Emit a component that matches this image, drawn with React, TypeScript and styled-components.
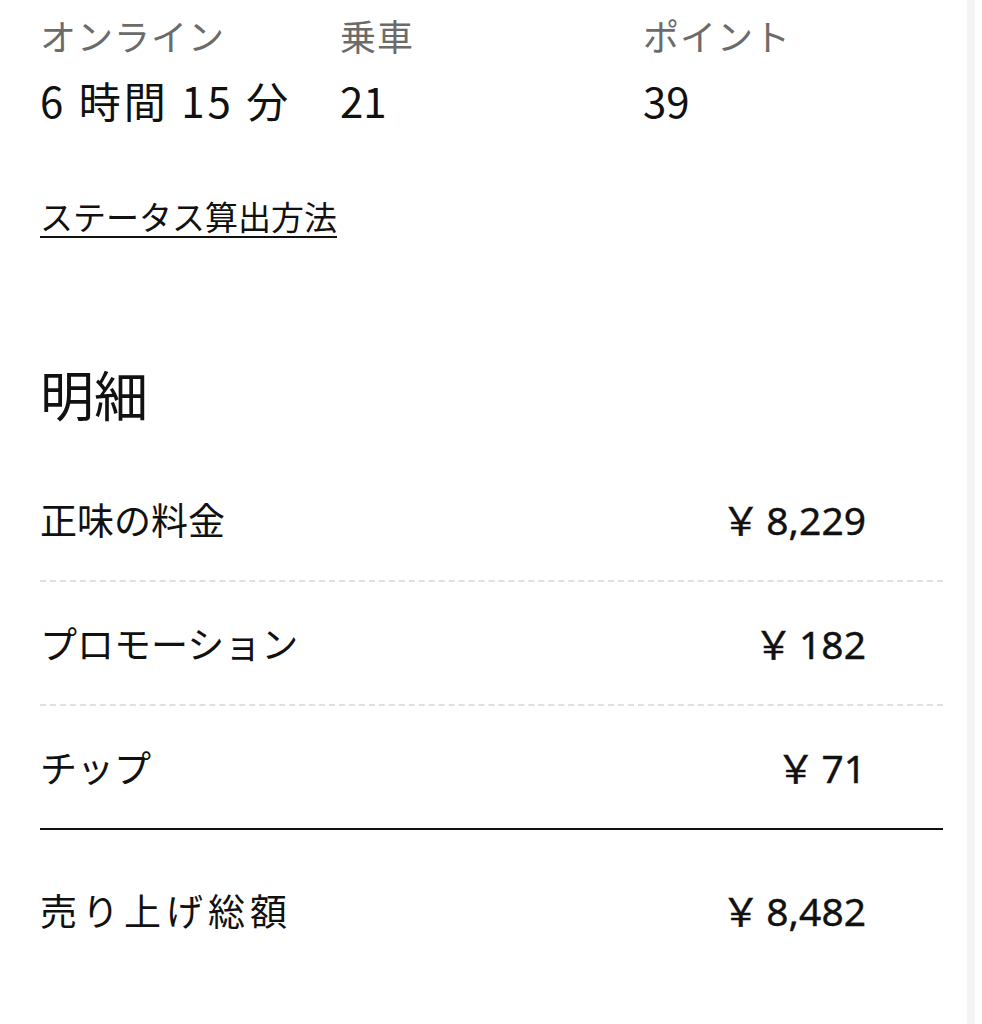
import React from 'react';
import styled, { createGlobalStyle } from 'styled-components';

const GlobalStyle = createGlobalStyle`
  body {
    margin: 0;
    background: #ffffff;
    font-family: "Noto Sans CJK JP", "Noto Sans", sans-serif;
    color: #111111;
  }
`;

const Page = styled.div`
  display: flex;
  width: 982px;
  min-height: 1024px;
`;

const Content = styled.main`
  width: 903px;
  padding-left: 40px;
`;

const Scrollbar = styled.div`
  width: 8px;
  margin-left: 24px;
  background: #f4f4f4;
`;

const StatsGrid = styled.div`
  display: grid;
  grid-template-columns: 300px 303px 1fr;
  padding-top: 13px;
`;

const Stat = styled.div`
  display: flex;
  flex-direction: column;
  gap: 18px;
`;

const StatLabel = styled.div`
  font-size: 36px;
  line-height: 44px;
  letter-spacing: 1px;
  color: #6b6b6b;
`;

const StatValue = styled.div<{ $wide?: boolean }>`
  font-size: 42px;
  line-height: 50px;
  color: #111111;
  letter-spacing: ${(p) => (p.$wide ? '3px' : '0')};
`;

const StatusLink = styled.a`
  display: inline-block;
  margin-top: 71px;
  font-size: 33px;
  line-height: 40px;
  color: #111111;
  text-decoration: underline;
  text-decoration-thickness: 2px;
  text-underline-offset: 6px;
`;

const Heading = styled.h2`
  margin: 128px 0 34px;
  font-size: 54px;
  line-height: 60px;
  font-weight: 400;
  color: #111111;
`;

const Row = styled.div<{ $line: 'dashed' | 'solid' | 'none'; $tall?: boolean }>`
  display: flex;
  align-items: center;
  justify-content: space-between;
  height: ${(p) => (p.$tall ? '160px' : '122px')};
  padding-right: 77px;
  border-bottom: ${(p) =>
    p.$line === 'solid' ? '2px solid #111111' : p.$line === 'dashed' ? '2px dashed #e0e0e0' : 'none'};
`;

const RowLabel = styled.span<{ $total?: boolean }>`
  font-size: 37px;
  line-height: 44px;
  color: #111111;
  letter-spacing: ${(p) => (p.$total ? '5px' : '0')};
`;

const RowValue = styled.span`
  display: inline-flex;
  align-items: baseline;
  font-size: 39px;
  line-height: 44px;
  color: #111111;
  font-family: "Noto Sans", "Noto Sans CJK JP", sans-serif;
  -webkit-text-stroke: 0.4px #111111;
`;

const Yen = styled.span`
  font-family: "Noto Sans CJK JP", sans-serif;
  margin-right: 6px;
`;

const stats = [
  { label: 'オンライン', value: '6 時間 15 分', wide: true },
  { label: '乗車', value: '21' },
  { label: 'ポイント', value: '39' },
];

const lines: { label: string; amount: string; line: 'dashed' | 'solid' | 'none'; total?: boolean }[] = [
  { label: '正味の料金', amount: '8,229', line: 'dashed' },
  { label: 'プロモーション', amount: '182', line: 'dashed' },
  { label: 'チップ', amount: '71', line: 'solid' },
  { label: '売り上げ総額', amount: '8,482', line: 'none', total: true },
];

export default function App() {
  return (
    <Page>
      <GlobalStyle />
      <Content>
        <StatsGrid>
          {stats.map((s) => (
            <Stat key={s.label}>
              <StatLabel>{s.label}</StatLabel>
              <StatValue $wide={s.wide}>{s.value}</StatValue>
            </Stat>
          ))}
        </StatsGrid>
        <StatusLink href="#">ステータス算出方法</StatusLink>
        <Heading>明細</Heading>
        {lines.map((l) => (
          <Row key={l.label} $line={l.line} $tall={l.total}>
            <RowLabel $total={l.total}>{l.label}</RowLabel>
            <RowValue>
              <Yen>￥</Yen>
              {l.amount}
            </RowValue>
          </Row>
        ))}
      </Content>
      <Scrollbar />
    </Page>
  );
}
